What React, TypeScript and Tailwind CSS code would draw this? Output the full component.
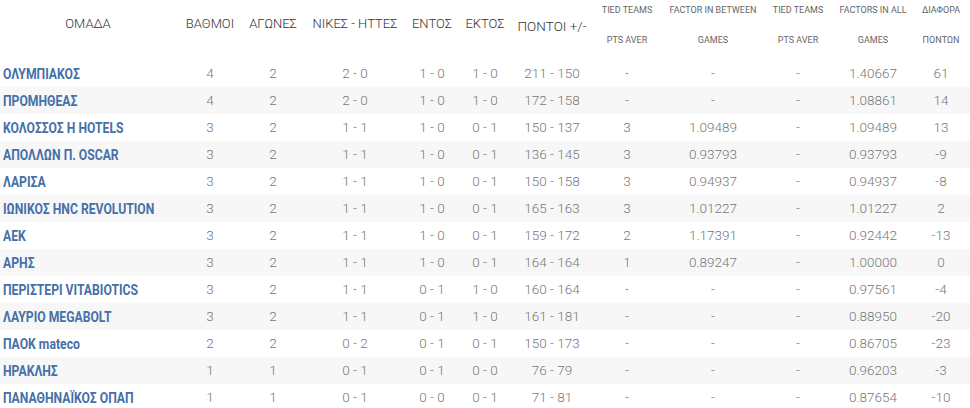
const ROWS = [
  ["ΟΛΥΜΠΙΑΚΟΣ", "4", "2", "2 - 0", "1 - 0", "1 - 0", "211 - 150", "-", "-", "-", "1.40667", "61"],
  ["ΠΡΟΜΗΘΕΑΣ", "4", "2", "2 - 0", "1 - 0", "1 - 0", "172 - 158", "-", "-", "-", "1.08861", "14"],
  ["ΚΟΛΟΣΣΟΣ Η HOTELS", "3", "2", "1 - 1", "1 - 0", "0 - 1", "150 - 137", "3", "1.09489", "-", "1.09489", "13"],
  ["ΑΠΟΛΛΩΝ Π. OSCAR", "3", "2", "1 - 1", "1 - 0", "0 - 1", "136 - 145", "3", "0.93793", "-", "0.93793", "-9"],
  ["ΛΑΡΙΣΑ", "3", "2", "1 - 1", "1 - 0", "0 - 1", "150 - 158", "3", "0.94937", "-", "0.94937", "-8"],
  ["ΙΩΝΙΚΟΣ HNC REVOLUTION", "3", "2", "1 - 1", "1 - 0", "0 - 1", "165 - 163", "3", "1.01227", "-", "1.01227", "2"],
  ["ΑΕΚ", "3", "2", "1 - 1", "1 - 0", "0 - 1", "159 - 172", "2", "1.17391", "-", "0.92442", "-13"],
  ["ΑΡΗΣ", "3", "2", "1 - 1", "1 - 0", "0 - 1", "164 - 164", "1", "0.89247", "-", "1.00000", "0"],
  ["ΠΕΡΙΣΤΕΡΙ VITABIOTICS", "3", "2", "1 - 1", "0 - 1", "1 - 0", "160 - 164", "-", "-", "-", "0.97561", "-4"],
  ["ΛΑΥΡΙΟ MEGABOLT", "3", "2", "1 - 1", "0 - 1", "1 - 0", "161 - 181", "-", "-", "-", "0.88950", "-20"],
  ["ΠΑΟΚ mateco", "2", "2", "0 - 2", "0 - 1", "0 - 1", "150 - 173", "-", "-", "-", "0.86705", "-23"],
  ["ΗΡΑΚΛΗΣ", "1", "1", "0 - 1", "0 - 1", "0 - 0", "76 - 79", "-", "-", "-", "0.96203", "-3"],
  ["ΠΑΝΑΘΗΝΑΪΚΟΣ ΟΠΑΠ", "1", "1", "0 - 1", "0 - 0", "0 - 1", "71 - 81", "-", "-", "-", "0.87654", "-10"],
];

const WIDTHS = [176, 68, 58, 106, 48, 58, 76, 74, 98, 72, 78, 58];

const MAIN_HEADERS = ["ΟΜΑΔΑ", "ΒΑΘΜΟΙ", "ΑΓΩΝΕΣ", "ΝΙΚΕΣ - ΗΤΤΕΣ", "ΕΝΤΟΣ", "ΕΚΤΟΣ"];
const SMALL_HEADERS = [
  ["TIED TEAMS", "PTS AVER"],
  ["FACTOR IN BETWEEN", "GAMES"],
  ["TIED TEAMS", "PTS AVER"],
  ["FACTORS IN ALL", "GAMES"],
  ["ΔΙΑΦΟΡΑ", "ΠΟΝΤΩΝ"],
];

export default function App() {
  return (
    <div className="w-[970px] bg-white font-['Roboto',sans-serif]">
      <table className="w-[970px] table-fixed border-collapse">
        <colgroup>
          {WIDTHS.map((w, i) => (
            <col key={i} style={{ width: w }} />
          ))}
        </colgroup>
        <thead>
          <tr className="h-[60px]">
            {MAIN_HEADERS.map((h) => (
              <th key={h} className="p-0 pt-[15px] align-top text-[13px] font-light leading-[18px] text-[#333]">
                {h}
              </th>
            ))}
            <th className="p-0 pt-[17px] align-top text-[13.5px] font-light leading-[18px] text-[#333]">
              ΠΟΝΤΟΙ +/-
            </th>
            {SMALL_HEADERS.map(([a, b], i) => (
              <th key={i} className="p-0 align-top text-[9px] font-normal leading-[20px] text-[#666]">
                <div>{a}</div>
                <div className="mt-[10px]">{b}</div>
              </th>
            ))}
          </tr>
        </thead>
        <tbody>
          {ROWS.map((row, r) => (
            <tr key={row[0]} className={`h-[27px] ${r % 2 === 1 ? "bg-[#f8f7f7]" : "bg-white"}`}>
              {row.map((cell, c) =>
                c === 0 ? (
                  <td key={c} className="overflow-visible whitespace-nowrap p-0 pl-[3px] text-left">
                    <span className="inline-block origin-left scale-x-[0.87] text-[14px] font-bold text-[#4570a8]">
                      {cell}
                    </span>
                  </td>
                ) : (
                  <td key={c} className="p-0 text-center text-[13.5px] font-light text-[#777]">
                    {cell}
                  </td>
                )
              )}
            </tr>
          ))}
        </tbody>
      </table>
    </div>
  );
}
